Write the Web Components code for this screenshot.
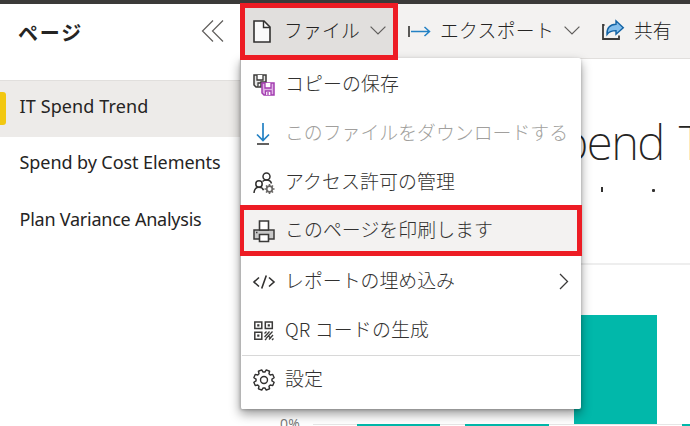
<!DOCTYPE html>
<html lang="ja"><head><meta charset="utf-8"><title>IT Spend Trend</title>
<style>html,body{margin:0;width:690px;height:426px;overflow:hidden;background:#fff}</style></head>
<body>
<report-app></report-app>
<script>
const make=(name,html,after)=>{const t=document.createElement('template');t.innerHTML=html;
customElements.define(name,class extends HTMLElement{constructor(){super();this.attachShadow({mode:'open'}).append(t.content.cloneNode(true));}
connectedCallback(){after&&after(this,this.shadowRoot);}});};

// Single-line label; "w" spreads the letters over a fixed width.
make('fit-label',`<style>:host{display:block;white-space:nowrap}span{display:inline-block}</style><span><slot></slot></span>`,(el,r)=>{
 const w=+el.getAttribute('w'),s=r.querySelector('span');if(!w)return;
 const n=s.getBoundingClientRect().width;s.style.letterSpacing=((w-n)/[...el.textContent].length)+'px';});

const ICONS={
collapse:`<path d="M12 1.5 1.5 12 12 22.5M22 1.5 11.5 12 22 22.5" stroke="#605e5c" stroke-width="1.2"/>`,
file:`<path d="M1 1h10l6 6v15H1Z" fill="#fafafa" stroke="#323130" stroke-width="1.6"/><path d="M10.5 1v6.500h6.500" stroke="#323130" stroke-width="1.4"/>`,
chev:`<path d="M.6.6 8 8 15.400.6" stroke="#605e5c" stroke-width="1.2"/>`,
exp:`<path d="M1 0v11" stroke="#323130" stroke-width="1.6"/><path d="M3 5.500h18M16.500 1l5 4.500-5 4.500" stroke="#2381c4" stroke-width="1.5"/>`,
share:`<path d="M2.500 5H1v14h16v-3.500" stroke="#3b3a39" stroke-width="1.800"/><path d="M5 14.500C4.500 8 8 4.500 14 4.300V.8l7.300 7-7.300 6.500v-3.700C10 10.600 7 11.500 5 14.500Z" fill="#83beec" stroke="#1464a5" stroke-width="1.400"/>`,
save:`<path d="M1 1h12v7H8v5H3L1 11Z" fill="#e6e6e6" stroke="#3b3a39" stroke-width="1.500"/><path d="M4 1v5h6V1M5 13V9h3" fill="#fff" stroke="#3b3a39" stroke-width="1.300"/><path d="M9 9h12v12H11l-2-2Z" fill="#dfb0e5" stroke="#a33db0" stroke-width="1.500"/><path d="M12 9v5h6V9M12.500 21v-4h5.500v4M15 18v3" fill="#fff" stroke="#a33db0" stroke-width="1.300"/>`,
down:`<path d="M10 0v17M4 11.500l6 6 6-6" stroke="#2381c4" stroke-width="1.700"/><path d="M4 21h12" stroke="#3b3a39" stroke-width="1.600"/>`,
people:`<g stroke="#323130" stroke-width="1.500"><circle cx="13.500" cy="4.500" r="3.500"/><circle cx="6" cy="12" r="3.200"/><path d="M1 21c.3-3.800 2-5.800 5-5.800 2.500 0 4 1.200 4.500 3M9.500 9.500c1-1 2.300-1.500 4-1.500 3 0 4.500 1.500 5 3.500"/></g><g stroke="#696765"><circle cx="16.500" cy="17" r="2.800" stroke-width="1.700"/><path d="M16.500 12v2M16.500 20v2M11.500 17h2M19.500 17h2M13 13.500l1.300 1.300M18.700 19.200l1.300 1.300M20 13.500l-1.300 1.300M14.300 19.200 13 20.500" stroke-width="1.600"/></g>`,
print:`<path d="M1 10h20v9H1Z" fill="#c8c8c8" stroke="#3b3a39" stroke-width="1.500"/><path d="M6.500 10V1h9v9M6.500 14.500h9V21.500h-9Z" fill="#fff" stroke="#3b3a39" stroke-width="1.600"/><path d="M6 10h10M3 12.500h1.500" stroke="#3b3a39" stroke-width="1.400"/>`,
code:`<path d="M6 6.500 1 11l5 4.500M16 6.500l5 4.500-5 4.500M13.300 4.500 8.700 17.500" stroke="#323130" stroke-width="1.600"/>`,
qr:`<g stroke="#3b3a39" stroke-width="1.500"><path d="M1.800 2h7v6.500h-7ZM12.300 2h7v6.500h-7ZM1.800 12.200h7v7h-7Z"/></g><path d="M4.200 4.200h2.200v2.200H4.200ZM14.700 4.200h2.200v2.200h-2.200ZM4.200 14.600h2.200v2.200H4.200Z" fill="#3b3a39"/><path d="M11.500 13.500l2-2M11.500 17l5-5.500M13 18.500l6.500-7M12 20l1.500-1.500M16 19.500l4-4.500M19 20l1.500-1.500M15 15.500l3 3" stroke="#3b3a39" stroke-width="1.300"/>`,
gear:`<path id="g" stroke="#323130" stroke-width="1.400" stroke-linejoin="round"/><circle cx="11" cy="11" r="3.500" stroke="#323130" stroke-width="1.400"/>`,
next:`<path d="M1 1l7.500 7.500L1 16" stroke="#3b3a39" stroke-width="1.300"/>`};
make('ui-icon',`<style>:host{display:block;flex:none}svg{display:block;overflow:visible}</style><svg fill="none"></svg>`,(el,r)=>{
 const s=r.querySelector('svg'),w=el.getAttribute('w')||22,h=el.getAttribute('h')||22;
 s.setAttribute('width',w);s.setAttribute('height',h);s.innerHTML=ICONS[el.getAttribute('name')];
 const g=s.querySelector('#g');
 if(g){let d='';for(let i=0;i<8;i++){[[-16,8],[-10,10.400],[10,10.400],[16,8]].forEach(([a,q])=>{const t=(i*45+22.500+a)*Math.PI/180;d+=(d?'L':'M')+(11+q*Math.cos(t)).toFixed(2)+' '+(11+q*Math.sin(t)).toFixed(2);});}g.setAttribute('d',d+'Z');}});

make('page-link',`<style>:host{display:flex;align-items:center;height:57px;padding-left:19.500px;padding-bottom:1px;box-sizing:border-box;color:#252423;font:400 18px/28px "Noto Sans","Open Sans",sans-serif;position:relative}
:host([active]){height:56px;padding-bottom:7px;background:#edebe9}
i{display:none;position:absolute;left:0;top:11px;width:6px;height:33px;border-radius:0 3px 3px 0;background:#f2c811}:host([active]) i{display:block}</style><i></i><slot></slot>`);

make('side-pane',`<style>:host{display:block;background:#fff}
header{height:77px;box-sizing:border-box;padding:14px 16px 0 18px;display:flex;justify-content:space-between;align-items:flex-start;border-bottom:1px solid #e1dfdd}
header fit-label{padding-top:1px;font:700 20px/28px "Noto Sans CJK JP",sans-serif;color:#252423}</style>
<header><fit-label w="65">ページ</fit-label><ui-icon name="collapse" w="23" h="24" style="padding-top:1px"></ui-icon></header>
<page-link active><fit-label w="129">IT Spend Trend</fit-label></page-link>
<page-link style="height:51px"><fit-label w="201">Spend by Cost Elements</fit-label></page-link>
<page-link style="height:63px"><fit-label w="182">Plan Variance Analysis</fit-label></page-link>`);

make('tool-button',`<style>:host{display:flex;align-items:center;box-sizing:border-box;height:100%;font:300 18.800px/28px "Noto Sans CJK JP",sans-serif;color:#252423}
::slotted(fit-label){padding-bottom:3px}::slotted(ui-icon[name=chev]){padding-bottom:2px}
:host([marked]){height:57px;width:158px;border:5px solid #ed1c24;background:#e1dfdd;margin-top:-1px;padding-left:8px;position:relative;z-index:3}</style><slot></slot>`);

make('tool-bar',`<style>:host{display:flex;height:54px;background:#f3f2f1;border-bottom:1px solid #e1dfdd;align-items:flex-start}</style><slot></slot>`);

make('menu-item',`<style>:host{display:flex;align-items:center;box-sizing:border-box;height:49px;padding-left:12px;color:#323130;font:300 18.900px/28px "Noto Sans CJK JP",sans-serif}
slot{display:block}::slotted(fit-label){padding-bottom:4px}ui-icon{margin-right:10px}.end{margin-left:auto;padding-right:13px}
:host([disabled]){color:#a19f9d}
:host([marked]){height:51px;width:342px;margin:-2px 0 1px -1px;border:5px solid #ed1c24;border-left-width:4px;padding-left:9px;background:#f3f2f1}
:host([last]){border-top:1px solid #d8d8d8;margin:0 1px;padding-left:11px}</style><ui-icon></ui-icon><slot></slot><span class="end"><slot name="end"></slot></span>`,(el,r)=>{
 const old=r.querySelector('ui-icon'),i=document.createElement('ui-icon');i.setAttribute('name',el.getAttribute('icon'));old.replaceWith(i);});

make('file-menu',`<style>:host{display:block;position:absolute;z-index:2;left:240px;top:58px;width:341px;height:351px;box-sizing:border-box;padding-top:2px;background:#fff;border-left:1px solid #b5b5b5;border-radius:2px;box-shadow:0 5px 11px rgba(0,0,0,.4),0 1px 3px rgba(0,0,0,.2)}</style><slot></slot>`);

make('report-canvas',`<style>:host{display:block;position:relative;height:367px;overflow:hidden;background:#fff}
.title{position:absolute;left:296px;top:53px;font:200 47.500px/60px "Noto Sans","Open Sans",sans-serif;word-spacing:4px;color:#252423}
.sub{position:absolute;background:#323130}
.rule{position:absolute;left:0;right:0;top:204px;height:2px;background:#eee}
.axis{position:absolute;left:73px;right:0;top:365px;height:1px;background:#e6e6e6}
.bar{position:absolute;background:#01b8aa}
.zero{position:absolute;left:40px;top:355px;font:400 14px/20px "Open Sans",sans-serif;color:#777}</style>
<fit-label class="title" w="256">Spend Trend</fit-label>
<i class="sub" style="left:361px;top:128px;width:2px;height:5px"></i><i class="sub" style="left:412px;top:130px;width:3px;height:3px;border-radius:1px"></i>
<div class="rule"></div><div class="axis"></div>
<div class="bar" style="left:334px;top:256px;width:83px;height:109px"></div>
<div class="bar" style="left:117px;top:365px;width:83px;height:2px"></div><div class="bar" style="left:225px;top:365px;width:84px;height:2px"></div><div class="bar" style="left:442px;top:365px;width:8px;height:2px"></div>
<fit-label class="zero" w="20">0%</fit-label>`);

make('report-app',`<style>:host{display:grid;grid-template:4px 422px/240px 450px;width:690px;height:426px;position:relative;overflow:hidden}
.top{grid-column:1/3;background:#3b3a39}main{min-width:0}</style>
<div class="top"></div><side-pane></side-pane>
<main><tool-bar>
<tool-button marked><ui-icon name="file" w="18" h="23"></ui-icon><fit-label w="76" style="margin:0 10px 0 13px">ファイル</fit-label><ui-icon name="chev" w="16" h="9"></ui-icon></tool-button>
<tool-button style="margin-left:10px"><ui-icon name="exp" w="22" h="11"></ui-icon><fit-label w="114" style="margin:0 10px 0 10px">エクスポート</fit-label><ui-icon name="chev" w="16" h="9"></ui-icon></tool-button>
<tool-button style="margin-left:22px"><ui-icon name="share" w="22" h="21" style="padding-bottom:2px"></ui-icon><fit-label style="margin-left:10px">共有</fit-label></tool-button>
</tool-bar><report-canvas></report-canvas></main>
<file-menu>
<menu-item icon="save"><fit-label w="114">コピーの保存</fit-label></menu-item>
<menu-item icon="down" disabled><fit-label w="283">このファイルをダウンロードする</fit-label></menu-item>
<menu-item icon="people"><fit-label w="170">アクセス許可の管理</fit-label></menu-item>
<menu-item icon="print" marked><fit-label w="208">このページを印刷します</fit-label></menu-item>
<menu-item icon="code"><fit-label w="170">レポートの埋め込み</fit-label><ui-icon slot="end" name="next" w="9" h="17"></ui-icon></menu-item>
<menu-item icon="qr"><fit-label w="144">QR コードの生成</fit-label></menu-item>
<menu-item icon="gear" last><fit-label w="38">設定</fit-label></menu-item>
</file-menu>`);
</script></body></html>
